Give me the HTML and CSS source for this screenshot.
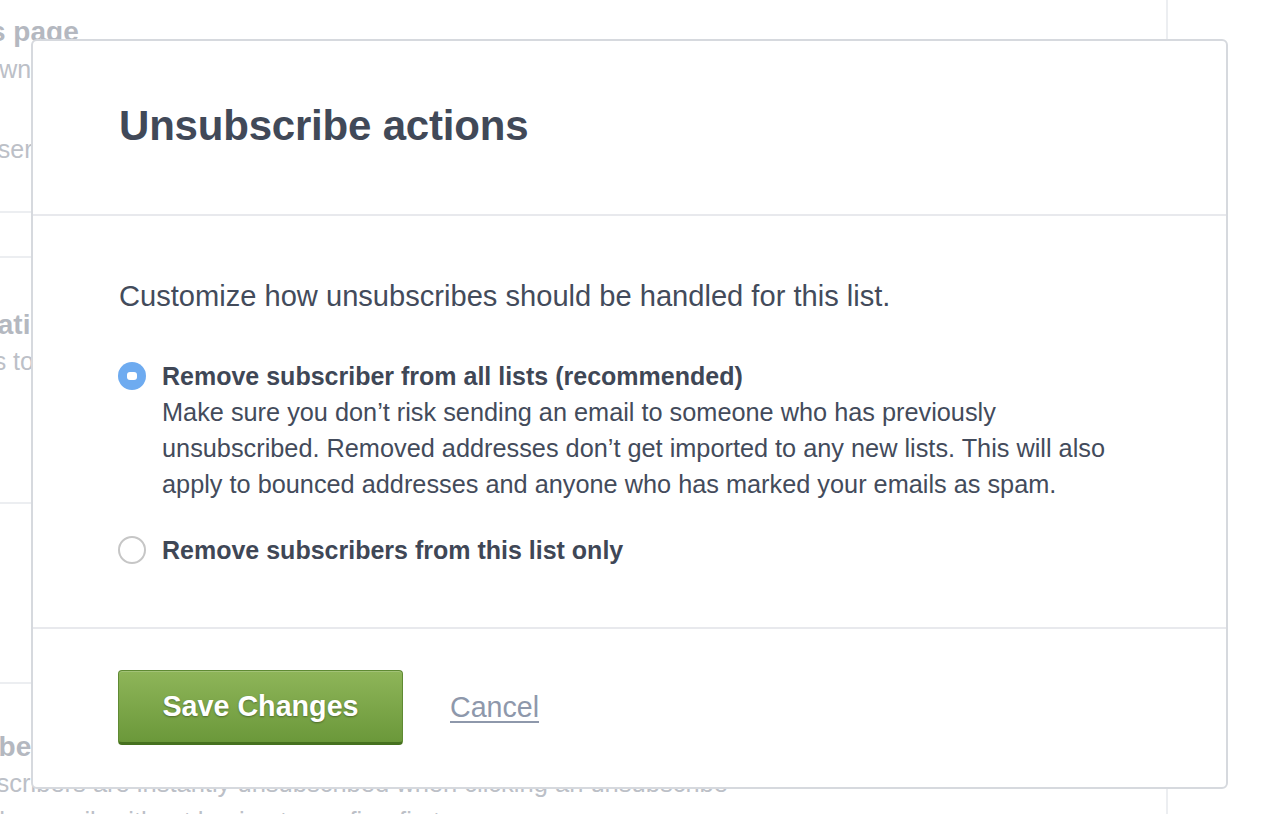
FILE: index.html
```html
<!DOCTYPE html>
<html lang="en">
<head>
<meta charset="utf-8">
<title>Unsubscribe actions</title>
<link rel="stylesheet" href="styles.css">
</head>
<body>
<div class="page">
  <div class="bg-main">
    <section class="bg-sec sec-a">
      <h2 class="bg-title">Forms page</h2>
      <p class="bg-text">Use downloadable content on this page after subscribers confirm.</p>
      <p class="bg-text gap-lg">Each user is redirected to this address once they sign up.</p>
    </section>
    <section class="bg-sec sec-b"></section>
    <section class="bg-sec sec-c">
      <h2 class="bg-title">Integrations</h2>
      <p class="bg-text">Options to connect your list with other services.</p>
    </section>
    <section class="bg-sec sec-d"></section>
    <section class="bg-sec sec-e">
      <h2 class="bg-title title-shift">Describe unsubscribe behaviour</h2>
      <p class="bg-text wrap">All subscribers are instantly unsubscribed when clicking an unsubscribe link in the email, without having to confirm first.</p>
    </section>
  </div>
  <div class="bg-side"></div>
</div>

<div class="modal">
  <div class="modal-header">
    <h1 class="modal-title">Unsubscribe actions</h1>
  </div>
  <div class="modal-body">
    <p class="intro">Customize how unsubscribes should be handled for this list.</p>
    <label class="option">
      <span class="radio radio-on"><span class="radio-dot"></span></span>
      <span class="option-text">
        <span class="option-label">Remove subscriber from all lists (recommended)</span>
        <span class="option-desc">Make sure you don’t risk sending an email to someone who has previously unsubscribed. Removed addresses don’t get imported to any new lists. This will also apply to bounced addresses and anyone who has marked your emails as spam.</span>
      </span>
    </label>
    <label class="option option-second">
      <span class="radio"></span>
      <span class="option-text">
        <span class="option-label">Remove subscribers from this list only</span>
      </span>
    </label>
  </div>
  <div class="modal-footer">
    <button class="btn-save" type="button">Save Changes</button>
    <a class="cancel" href="#">Cancel</a>
  </div>
</div>
</body>
</html>
```

FILE: styles.css
```css
* { box-sizing: border-box; }

html, body {
  margin: 0;
  padding: 0;
  background: #ffffff;
  overflow: hidden;
  width: 1268px;
  height: 814px;
}

body {
  font-family: "Liberation Sans", Arial, Helvetica, sans-serif;
  color: #434b5b;
  position: relative;
}

/* ---------- background page ---------- */
.page {
  display: flex;
  height: 814px;
}

.bg-main {
  margin-left: -80px;
  width: 1248px;
  flex: none;
  border-right: 2px solid #eceef1;
  padding-right: 40px;
}

.bg-side {
  flex: 1;
}

.bg-sec {
  border-bottom: 2px solid #eceef1;
}

.sec-a { height: 213px; padding-top: 15px; }
.sec-b { height: 45px; }
.sec-c { height: 246px; padding-top: 50px; }
.sec-d { height: 180px; }
.sec-e { border-bottom: none; padding-top: 46px; }

.bg-title {
  margin: 0;
  font-size: 28px;
  line-height: 34px;
  font-weight: 700;
  color: #b4b8c0;
  white-space: nowrap;
}

.bg-title.title-shift {
  margin-left: -7px;
}

.bg-text {
  margin: 4px 0 0;
  font-size: 25px;
  line-height: 32px;
  color: #bcc0c7;
  white-space: nowrap;
}

.bg-text.wrap {
  white-space: normal;
  max-width: 840px;
  font-size: 25.5px;
  line-height: 38px;
  margin-top: 0;
}

.sec-c .bg-text { margin-top: 3px; }
.bg-text.gap-lg { margin-top: 48px; }

/* ---------- modal ---------- */
.modal {
  position: absolute;
  left: 31px;
  top: 39px;
  width: 1197px;
  height: 750px;
  background: #ffffff;
  border: 2px solid #d6d9de;
  border-radius: 6px;
  display: flex;
  flex-direction: column;
}

.modal-header {
  padding: 64px 85px 67px 86px;
  border-bottom: 2px solid #e8e9ed;
}

.modal-title {
  margin: 0;
  font-size: 42px;
  line-height: 42px;
  font-weight: 700;
  color: #414958;
  letter-spacing: -0.2px;
}

.modal-body {
  padding: 62px 85px 59px 85px;
  border-bottom: 2px solid #e8e9ed;
}

.intro {
  margin: 0 0 44px 1px;
  font-size: 29.1px;
  line-height: 36px;
}

.option {
  display: flex;
  align-items: flex-start;
  gap: 16px;
}

.option-second {
  margin-top: 30px;
}

.radio {
  flex: none;
  width: 28px;
  height: 28px;
  margin-top: 4px;
  border-radius: 50%;
  border: 2px solid #c6c6c6;
  background: #ffffff;
  display: flex;
  align-items: center;
  justify-content: center;
}

.radio-on {
  border: none;
  background: #6eabf0;
}

.radio-dot {
  width: 10px;
  height: 8px;
  border-radius: 3px;
  background: #ffffff;
}

.option-text {
  display: flex;
  flex-direction: column;
  font-size: 25.3px;
  line-height: 36px;
  width: 970px;
}

.option-label {
  font-weight: 700;
  font-size: 25px;
  color: #3f4756;
}

.option-desc {
  color: #434b5b;
}

.modal-footer {
  flex: 1;
  padding: 41px 85px 0 85px;
  display: flex;
  align-items: flex-start;
  gap: 47px;
}

.btn-save {
  width: 285px;
  height: 75px;
  border: 1px solid #5f8a33;
  border-bottom: 3px solid #46711f;
  border-radius: 4px;
  background: linear-gradient(#8eb559, #6b983a);
  box-shadow: inset 0 1px 0 rgba(255, 255, 255, 0.18);
  color: #ffffff;
  font-family: "Liberation Sans", Arial, Helvetica, sans-serif;
  font-weight: 700;
  font-size: 28.7px;
  text-shadow: 0 1px 2px rgba(0, 0, 0, 0.35);
  padding: 0;
  cursor: pointer;
}

.cancel {
  margin-top: 19px;
  font-size: 28.6px;
  line-height: 36px;
  color: #8e98ab;
  text-decoration: underline;
  text-decoration-thickness: 2px;
  text-underline-offset: 4px;
}
```
